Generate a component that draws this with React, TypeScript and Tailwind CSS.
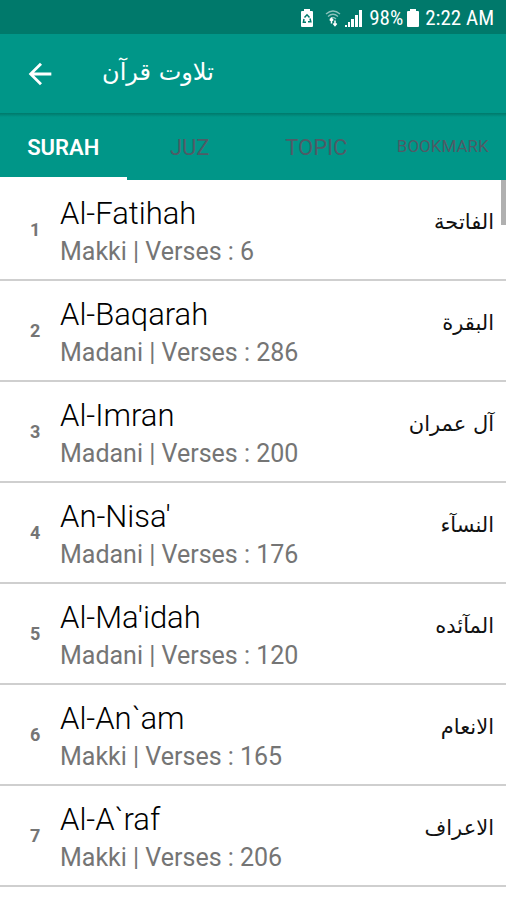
import clsx from "clsx";
import { MdArrowBack } from "react-icons/md";

interface Surah {
  id: number;
  name: string;
  arabic: string;
  place: "Makki" | "Madani";
  verses: number;
}

const SURAHS: Surah[] = [
  { id: 1, name: "Al-Fatihah", arabic: "الفاتحة", place: "Makki", verses: 6 },
  { id: 2, name: "Al-Baqarah", arabic: "البقرة", place: "Madani", verses: 286 },
  { id: 3, name: "Al-Imran", arabic: "آل عمران", place: "Madani", verses: 200 },
  { id: 4, name: "An-Nisa'", arabic: "النسآء", place: "Madani", verses: 176 },
  { id: 5, name: "Al-Ma'idah", arabic: "المآئده", place: "Madani", verses: 120 },
  { id: 6, name: "Al-An`am", arabic: "الانعام", place: "Makki", verses: 165 },
  { id: 7, name: "Al-A`raf", arabic: "الاعراف", place: "Makki", verses: 206 },
];

const TABS = ["SURAH", "JUZ", "TOPIC", "BOOKMARK"];

function StatusBar() {
  return (
    <div className="flex h-[34px] items-center justify-end bg-[#00796b] pr-3 pt-0.5 font-['Roboto_Condensed',Roboto,sans-serif] text-[21px] leading-6 text-white">
      <svg className="mr-3 h-[18px] w-3" viewBox="0 0 12 18" fill="none">
        <path d="M3 0h6v2h2q1 0 1 1v14q0 1-1 1H1q-1 0-1-1V3q0-1 1-1h2z" fill="currentColor" />
        <path
          d="M3.500 8.500 6 5.800l2.500 2.700M9 9.500l.8 3.200H7M5 13.300H2.400L3 10"
          stroke="#00796b"
          strokeWidth="1.5"
        />
      </svg>
      <svg className="mr-1 h-[18px] w-4" viewBox="0 0 16 18" fill="none" stroke="currentColor">
        <g opacity="0.55">
          <path d="M1 5q7-6 14 0M3 7.500q5-4.500 10 0M5 10q3-3 6 0" strokeWidth="1.3" />
        </g>
        <path d="M6.500 9.500v5M4.800 11.500l1.700-2 1.700 2M10 11.500v5M8.300 14.500l1.700 2 1.700-2" strokeWidth="1.5" />
      </svg>
      <svg className="mr-1.5 h-[18px] w-[18px]" viewBox="0 0 18 18" fill="currentColor">
        <path d="M0 16h2v2H0zM3 13h2v5H3zM6 10h3v8H6zM10 6h3v12h-3zM14 1h3v17h-3z" />
      </svg>
      <span>98%</span>
      <svg className="mr-1.5 ml-1 h-[18px] w-3" viewBox="0 0 12 18" fill="currentColor">
        <path d="M3 0h6v2h2q1 0 1 1v14q0 1-1 1H1q-1 0-1-1V3q0-1 1-1h2z" />
      </svg>
      <time>2:22 AM</time>
    </div>
  );
}

function AppBar() {
  return (
    <header className="flex h-[79px] items-center bg-[#009688] pl-[23px] text-white">
      <button type="button" aria-label="Back" className="mr-[45px]">
        <MdArrowBack className="size-[34px]" />
      </button>
      <h1
        dir="rtl"
        lang="ur"
        className="pb-1 font-['DejaVu_Sans',sans-serif] text-2xl leading-8"
      >
        تلاوت قرآن
      </h1>
    </header>
  );
}

function TabBar() {
  return (
    <div className="bg-[#009688] bg-linear-to-b from-[#00796b] to-[#009688] to-6%">
      <nav role="tablist" className="grid h-[67px] grid-cols-4">
        {TABS.map((tab, index) => (
          <button
            key={tab}
            type="button"
            role="tab"
            aria-selected={index === 0}
            className={clsx(
              "border-b-3 pt-1",
              index === 0
                ? "border-white font-semibold text-white"
                : "border-transparent text-[#4f5b66]",
              tab === "BOOKMARK" ? "text-[17px]" : "text-[22px]"
            )}
          >
            {tab}
          </button>
        ))}
      </nav>
    </div>
  );
}

function SurahRow({ surah }: { surah: Surah }) {
  return (
    <li className="flex h-[101px] items-center border-b-2 border-[#cfcfcf] pr-3">
      <span className="w-[60px] pl-[30px] text-lg font-bold text-[#757575]">
        {surah.id}
      </span>
      <div className="flex-1 pt-1">
        <h2 className="text-[31px] leading-10 font-light text-black">{surah.name}</h2>
        <p className="text-[25px] leading-9 text-[#757575]">
          {surah.place} | Verses : {surah.verses}
        </p>
      </div>
      <span
        dir="rtl"
        lang="ar"
        className="pb-4 font-['DejaVu_Sans',sans-serif] text-[21px] leading-8 text-[#111111]"
      >
        {surah.arabic}
      </span>
    </li>
  );
}

export default function App() {
  return (
    <div className="min-h-screen bg-white font-[Roboto,sans-serif]">
      <StatusBar />
      <AppBar />
      <TabBar />
      <main className="relative">
        <ul>
          {SURAHS.map((surah) => (
            <SurahRow key={surah.id} surah={surah} />
          ))}
        </ul>
        <div className="absolute top-0 right-0 h-[45px] w-[5px] bg-[#b0b0b0]" />
      </main>
    </div>
  );
}
